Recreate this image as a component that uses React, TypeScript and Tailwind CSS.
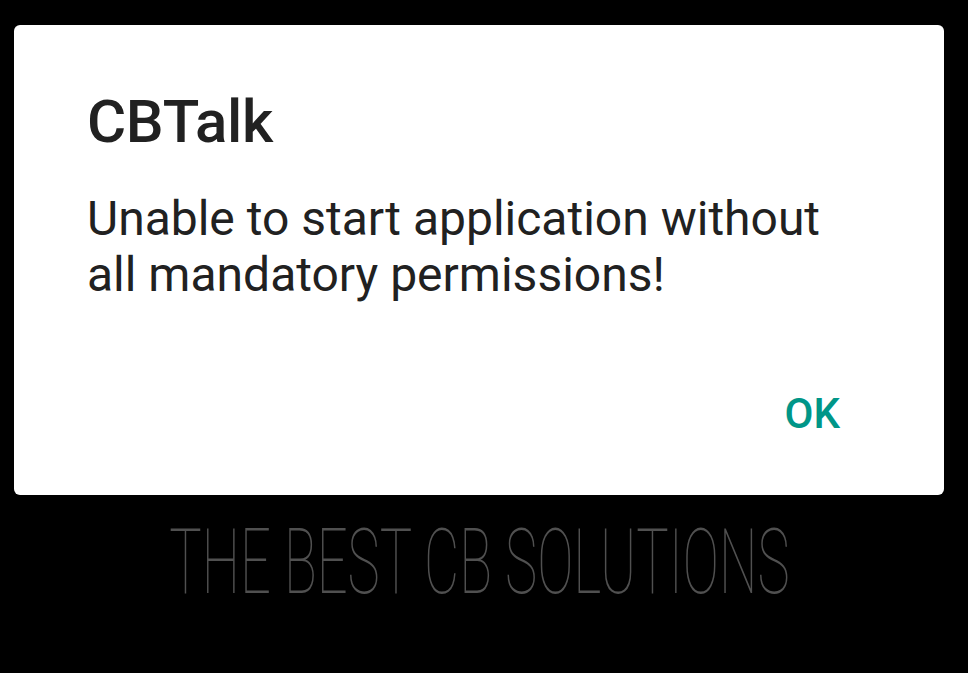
export default function App() {
  return (
    <div className="w-[968px] h-[673px] bg-black flex flex-col overflow-hidden" style={{ fontFamily: 'Roboto, "Noto Sans", sans-serif' }}>
      <div className="mt-[25px] ml-[14px] w-[930px] h-[470px] bg-white rounded-[6px] flex flex-col pl-[73px] pr-[104px]">
        <div className="mt-[62px] text-[60px] leading-[70px] font-medium text-[#212121] tracking-[-0.3px]">CBTalk</div>
        <div className="mt-[34px] text-[48px] leading-[56px] text-[#212121]">Unable to start application without all mandatory permissions!</div>
        <div className="mt-auto mb-[57px] flex justify-end">
          <div className="text-[42px] leading-[48px] font-medium text-[#009688]">OK</div>
        </div>
      </div>
      <div className="mt-[12px] w-full flex justify-center pr-[10px]">
        <div className="text-[91px] leading-[110px] font-thin text-[#505050] whitespace-nowrap scale-x-[0.597]" style={{ fontFamily: 'Roboto, sans-serif' }}>THE BEST CB SOLUTIONS</div>
      </div>
    </div>
  );
}
